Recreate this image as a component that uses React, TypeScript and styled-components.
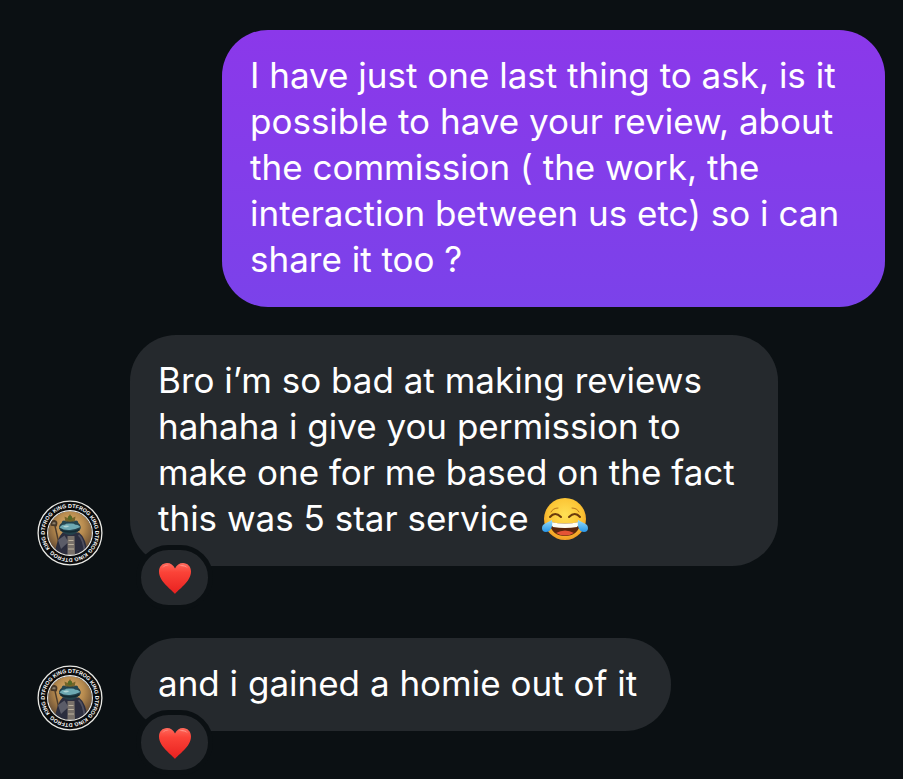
import React, { useId } from "react";
import styled, { createGlobalStyle, css } from "styled-components";

const colors = {
  page: "#0b1013",
  incoming: "#25292d",
  text: "#ffffff",
};

const GlobalStyle = createGlobalStyle`
  *, *::before, *::after { box-sizing: border-box; }
  body {
    margin: 0;
    background: ${colors.page};
    color: ${colors.text};
    font-family: Inter, "Liberation Sans", sans-serif;
  }
`;

const Thread = styled.main`
  display: flex;
  flex-direction: column;
  gap: 28px;
  min-height: 100vh;
  padding: 30px 18px 28px 37px;
  overflow: hidden;
`;

const MessageRow = styled.article<{ $own?: boolean }>`
  display: flex;
  align-items: flex-end;
  justify-content: ${(p) => (p.$own ? "flex-end" : "flex-start")};
  gap: 27px;
  margin-bottom: ${(p) => (p.$own ? "0" : "44px")};

  &:last-child {
    margin-bottom: 0;
  }
`;

const Bubble = styled.div<{ $own?: boolean }>`
  position: relative;
  max-width: ${(p) => (p.$own ? "663px" : "648px")};
  padding: 22px 34px 25px 28px;
  border-radius: 46px;
  ${(p) =>
    p.$own
      ? css`
          background: linear-gradient(#8b38ea, #7b42ea);
        `
      : css`
          background: ${colors.incoming};
        `}
`;

const MessageText = styled.p`
  margin: 0;
  font-size: 35px;
  line-height: 46px;
`;

const Reaction = styled.button`
  position: absolute;
  left: 6px;
  bottom: -44px;
  display: flex;
  align-items: center;
  justify-content: center;
  width: 77px;
  height: 65px;
  padding: 0;
  border: 5px solid ${colors.page};
  border-radius: 33px;
  background: ${colors.incoming};
  cursor: pointer;
`;

const HeartSvg = styled.svg`
  width: 32px;
  height: 32px;
`;

const JoySvg = styled.svg`
  width: 46px;
  height: 44px;
  margin: -4px 0 -4px 4px;
  vertical-align: -7px;
`;

const AvatarSvg = styled.svg`
  flex: none;
  width: 66px;
  height: 66px;
`;

const RingText = styled.text`
  font-family: "Liberation Sans", sans-serif;
  font-size: 54px;
  font-weight: 700;
  fill: #ffffff;
`;

function Heart() {
  const id = useId();
  return (
    <HeartSvg viewBox="0 0 32 32" aria-hidden="true">
      <defs>
        <linearGradient id={id} x1="0" y1="0" x2="0" y2="1">
          <stop offset="0" stopColor="#ff6a5c" />
          <stop offset="0.3" stopColor="#fb4338" />
          <stop offset="1" stopColor="#e8201f" />
        </linearGradient>
      </defs>
      <path
        d="M16 32C13 27.500 0 20 0 9.500C0 4.500 3.500 1 8 1C11.500 1 14.500 3 16 6.500C17.500 3 20.500 1 24 1C28.500 1 32 4.500 32 9.500C32 20 19 27.500 16 32Z"
        fill={`url(#${id})`}
      />
      <path d="M3 6Q6 2 10 3Q6 3.500 3 6ZM20 4Q25 1 29 6Q25 3.500 20 4Z" fill="#ffaaa0" opacity="0.7" />
    </HeartSvg>
  );
}

function TearsOfJoy() {
  const id = useId();
  return (
    <JoySvg viewBox="0 0 46 44" role="img" aria-label="face with tears of joy">
      <defs>
        <radialGradient id={`${id}f`} cx="0.5" cy="0.4" r="0.62">
          <stop offset="0" stopColor="#ffe055" />
          <stop offset="0.65" stopColor="#fcc434" />
          <stop offset="1" stopColor="#ef9522" />
        </radialGradient>
        <linearGradient id={`${id}t`} x1="0" y1="0" x2="0" y2="1">
          <stop offset="0" stopColor="#9adcf8" />
          <stop offset="1" stopColor="#2696e8" />
        </linearGradient>
      </defs>
      <circle cx="23" cy="21" r="21" fill={`url(#${id}f)`} />
      <path d="M8 19Q13 13 19 19M27 19Q33 13 38 19" fill="none" stroke="#6b3a0c" strokeWidth="2" strokeLinecap="round" />
      <path d="M9 14Q11 10 16 10M30 10Q35 10 37 14" fill="none" stroke="#b9751d" strokeWidth="1" strokeLinecap="round" />
      <path d="M8 24Q23 27 38 24C38 34 31 38 23 38C15 38 8 34 8 24Z" fill="#5b260c" />
      <path d="M9 24Q23 27 37 24Q37 27 35 29Q23 31 11 29Q9 27 9 24Z" fill="#fffdf2" />
      <path d="M14 35Q23 30 32 35Q23 40 14 35Z" fill="#e55335" />
      <path d="M10 22C11 28 9 34 4 34C0 34-1 30 1 27C3 25 7 24 10 22Z" fill={`url(#${id}t)`} />
      <path d="M36 22C35 28 37 34 42 34C46 34 47 30 45 27C43 25 39 24 36 22Z" fill={`url(#${id}t)`} />
    </JoySvg>
  );
}

function Avatar() {
  const id = useId();
  return (
    <AvatarSvg viewBox="-330 -330 660 660" role="img" aria-label="King Dtfrog">
      <defs>
        <path id={`${id}r`} d="M-199 155A252 252 0 1 1 199 -155A252 252 0 1 1 -199 155" />
        <radialGradient id={`${id}b`} cx="0.5" cy="0.35" r="0.65">
          <stop offset="0" stopColor="#e7b873" />
          <stop offset="0.5" stopColor="#b68a4e" />
          <stop offset="1" stopColor="#5c4430" />
        </radialGradient>
        <clipPath id={`${id}c`}>
          <circle r="220" />
        </clipPath>
      </defs>
      <circle r="319" fill="#0b0c0d" stroke="#e9e9e5" strokeWidth="13" />
      <RingText>
        <textPath href={`#${id}r`}>KING DTFROG KING DTFROG KING DTFROG KING DTFROG</textPath>
      </RingText>
      <g clipPath={`url(#${id}c)`}>
        <circle r="220" fill={`url(#${id}b)`} />
        <path d="M-150 -70L-105 130" stroke="#4c3b2b" strokeWidth="14" />
        <path d="M-185 -80Q-190 -120 -155 -120Q-125 -115 -140 -75Z" fill="#8b7d68" stroke="#463728" strokeWidth="18" />
        <path d="M-150 230Q-140 60 -75 -5L90 -5Q165 50 180 230Z" fill="#2b2d3e" />
        <path d="M-120 70L-55 25L-15 90L-90 160Z" fill="#5b5c68" />
        <path d="M85 20Q135 55 150 210" fill="none" stroke="#50505f" strokeWidth="18" />
        <path d="M-25 30L45 30L50 230L-25 230Z" fill="#79716a" />
        <path d="M-15 75H35M-18 115H38M-20 160H40" stroke="#bbb19e" strokeWidth="12" />
        <path d="M-110 -45Q-115 -95 -60 -110Q0 -135 60 -110Q115 -95 105 -40Q55 20 0 20Q-65 20 -110 -45Z" fill="#24414b" />
        <path d="M-105 -55Q-75 -100 0 -95Q65 -102 104 -60Q55 -35 0 -30Q-60 -25 -105 -55Z" fill="#6ea9b3" />
        <path d="M-70 -65Q-40 -80 -5 -70Q-35 -45 -70 -65Z" fill="#b0d5d5" />
        <path d="M-95 -30Q0 10 95 -32" fill="none" stroke="#142a32" strokeWidth="15" />
        <circle cx="-60" cy="-104" r="22" fill="#244650" />
        <circle cx="60" cy="-104" r="22" fill="#244650" />
        <path d="M-48 -120L-55 -165L-25 -150L0 -190L25 -150L55 -165L48 -120Q0 -105 -48 -120Z" fill="#75652a" />
        <circle cy="-150" r="22" fill="#536a27" />
      </g>
      <circle r="224" fill="none" stroke="#eeeeea" strokeWidth="11" />
    </AvatarSvg>
  );
}

function IncomingMessage({ children }: { children: React.ReactNode }) {
  return (
    <MessageRow>
      <Avatar />
      <Bubble>
        <MessageText>{children}</MessageText>
        <Reaction type="button" aria-label="Heart reaction">
          <Heart />
        </Reaction>
      </Bubble>
    </MessageRow>
  );
}

export default function App() {
  return (
    <>
      <GlobalStyle />
      <Thread>
        <MessageRow $own>
          <Bubble $own>
            <MessageText>
              I have just one last thing to ask, is it possible to have your review, about the
              commission ( the work, the interaction between us etc) so i can share it too ?
            </MessageText>
          </Bubble>
        </MessageRow>
        <IncomingMessage>
          Bro i’m so bad at making reviews hahaha i give you permission to make one for me based on
          the fact this was 5 star service <TearsOfJoy />
        </IncomingMessage>
        <IncomingMessage>and i gained a homie out of it</IncomingMessage>
      </Thread>
    </>
  );
}
